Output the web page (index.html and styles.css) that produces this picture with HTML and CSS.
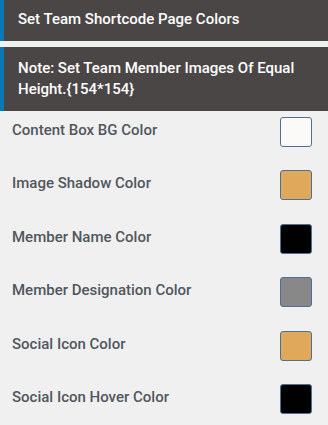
FILE: index.html
```html
<!DOCTYPE html>
<html lang="en">
<head>
    <meta charset="UTF-8">
    <meta name="viewport" content="width=device-width, initial-scale=1.0">
    <title>Team Shortcode Colors</title>
    <link rel="stylesheet" href="styles.css">
</head>
<body>
    <div class="panel">
        <div class="panel-head">Set Team Shortcode Page Colors</div>
        <div class="panel-note">Note: Set Team Member Images Of Equal Height.{154*154}</div>

        <div class="color-list">
            <div class="color-row">
                <span class="color-label">Content Box BG Color</span>
                <span class="swatch swatch-white"></span>
            </div>
            <div class="color-row">
                <span class="color-label">Image Shadow Color</span>
                <span class="swatch swatch-orange"></span>
            </div>
            <div class="color-row">
                <span class="color-label">Member Name Color</span>
                <span class="swatch swatch-black"></span>
            </div>
            <div class="color-row">
                <span class="color-label">Member Designation Color</span>
                <span class="swatch swatch-gray"></span>
            </div>
            <div class="color-row">
                <span class="color-label">Social Icon Color</span>
                <span class="swatch swatch-orange"></span>
            </div>
            <div class="color-row">
                <span class="color-label">Social Icon Hover Color</span>
                <span class="swatch swatch-black"></span>
            </div>
        </div>
    </div>
</body>
</html>
```

FILE: styles.css
```css
body {
    margin: 0;
    padding: 0;
    background-color: #f0f0f0;
    font-family: Roboto, "Liberation Sans", sans-serif;
}
.panel {
    width: 328px;
}
.panel-head,
.panel-note {
    background-color: #4b4646;
    color: #ffffff;
    border-left: 4px solid #0a78b4;
    font-size: 15px;
    font-weight: 500;
}
.panel-head {
    height: 41px;
    line-height: 38px;
    padding-left: 14px;
    margin-bottom: 6px;
}
.panel-note {
    padding: 11px 14px 11px 14px;
    line-height: 21px;
}
.color-list {
    display: flex;
    flex-direction: column;
}
.color-row {
    display: flex;
    align-items: flex-start;
    justify-content: space-between;
    height: 53.4px;
    padding: 6px 16px 0 12px;
    box-sizing: border-box;
}
.color-label {
    font-size: 15px;
    font-weight: 500;
    line-height: 18px;
    color: #50575e;
    margin-top: 4px;
}
.swatch {
    width: 30px;
    height: 28px;
    border: 1px solid #4d7196;
    border-radius: 3px;
}
.swatch-white {
    background-color: #fbfaf8;
}
.swatch-orange {
    background-color: #e0a85a;
}
.swatch-black {
    background-color: #000000;
}
.swatch-gray {
    background-color: #888888;
}
```
